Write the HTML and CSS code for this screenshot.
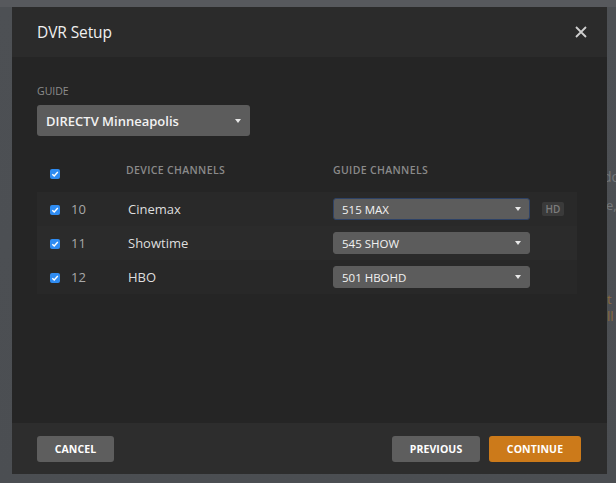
FILE: index.html
```html
<!DOCTYPE html>
<html>
<head>
<meta charset="utf-8">
<link rel="stylesheet" href="styles.css">
</head>
<body>
<div class="backdrop">
  <span class="bg-text bg-t1">do</span>
  <span class="bg-text bg-t2">e,</span>
  <span class="bg-text bg-t3 orange">t</span>
  <span class="bg-text bg-t4 orange">ll</span>
</div>
<div class="stage">
  <div class="modal">
    <div class="modal-header">
      <h1 class="title">DVR Setup</h1>
      <svg class="close" width="12" height="12" viewBox="0 0 12 12"><path d="M1 1 L11 11 M11 1 L1 11" stroke="#cfcfcf" stroke-width="1.8" fill="none"/></svg>
    </div>
    <div class="modal-body">
      <div class="label">GUIDE</div>
      <div class="select guide-select"><span>DIRECTV Minneapolis</span><i class="caret"></i></div>

      <div class="table">
        <div class="thead">
          <span class="cb"><svg width="8" height="8" viewBox="0 0 8 8"><path d="M1.3 4.2 L3.2 6 L6.8 2" stroke="#fff" stroke-width="1.4" fill="none"/></svg></span>
          <span></span>
          <span class="th dev">DEVICE CHANNELS</span>
          <span class="th">GUIDE CHANNELS</span>
          <span></span>
        </div>
        <div class="row r1">
          <span class="cb"><svg width="8" height="8" viewBox="0 0 8 8"><path d="M1.3 4.2 L3.2 6 L6.8 2" stroke="#fff" stroke-width="1.4" fill="none"/></svg></span>
          <span class="num">10</span>
          <span class="name">Cinemax</span>
          <div class="select row-select focused"><span>515 MAX</span><i class="caret"></i></div>
          <span class="hd">HD</span>
        </div>
        <div class="row r2">
          <span class="cb"><svg width="8" height="8" viewBox="0 0 8 8"><path d="M1.3 4.2 L3.2 6 L6.8 2" stroke="#fff" stroke-width="1.4" fill="none"/></svg></span>
          <span class="num">11</span>
          <span class="name">Showtime</span>
          <div class="select row-select"><span>545 SHOW</span><i class="caret"></i></div>
          <span></span>
        </div>
        <div class="row r3">
          <span class="cb"><svg width="8" height="8" viewBox="0 0 8 8"><path d="M1.3 4.2 L3.2 6 L6.8 2" stroke="#fff" stroke-width="1.4" fill="none"/></svg></span>
          <span class="num">12</span>
          <span class="name">HBO</span>
          <div class="select row-select"><span>501 HBOHD</span><i class="caret"></i></div>
          <span></span>
        </div>
      </div>
    </div>
    <div class="modal-footer">
      <button class="btn cancel">CANCEL</button>
      <div class="spacer"></div>
      <button class="btn previous">PREVIOUS</button>
      <button class="btn continue">CONTINUE</button>
    </div>
  </div>
</div>
</body>
</html>
```
FILE: styles.css
```css
* { box-sizing: border-box; }
html, body {
  margin: 0;
  padding: 0;
  width: 616px;
  height: 483px;
  overflow: hidden;
}
body {
  font-family: "Open Sans", "Noto Sans", sans-serif;
  background: linear-gradient(to bottom, #57595d 0, #57595d 7px, #4d5054 7px, #4b4e52 100%);
  position: relative;
}
.backdrop {
  position: absolute;
  left: 0; top: 0; width: 616px; height: 483px;
}
.bg-text {
  position: absolute;
  font-size: 14px;
  line-height: 16px;
  color: #74777a;
  white-space: nowrap;
}
.bg-t1 { top: 169px; left: 603px; }
.bg-t2 { top: 197px; left: 606px; font-size: 13px; }
.bg-t3 { top: 291px; left: 607px; font-size: 13px; }
.bg-t4 { top: 308px; left: 607px; font-size: 13px; }
.orange { color: #8a6a3e; }

.stage {
  position: relative;
  padding: 7px 0 0 12px;
}
.modal {
  width: 595px;
  height: 467px;
  display: flex;
  flex-direction: column;
  background: #252525;
}
.modal-header {
  height: 50px;
  flex: none;
  background: #2b2b2b;
  display: flex;
  align-items: center;
  justify-content: space-between;
  padding: 0 20px 0 25px;
}
.title {
  margin: 0;
  font-size: 15.5px;
  font-weight: 400;
  color: #f0f0f0;
  letter-spacing: -0.1px;
}
.close { display: block; margin-top: -1px; }

.modal-body {
  flex: 1;
  padding: 27px 30px 0 25px;
}
.label {
  font-size: 10.5px;
  line-height: 14px;
  color: #8d8d8d;
}
.select {
  position: relative;
  display: flex;
  align-items: center;
  background: #5c5c5c;
  border-radius: 3px;
  color: #f2f2f2;
}
.guide-select {
  margin-top: 7px;
  width: 213px;
  height: 31px;
  padding-left: 9px;
  font-size: 13px;
  font-weight: 600;
}
.caret {
  position: absolute;
  right: 9px;
  top: 50%;
  margin-top: -2px;
  width: 0; height: 0;
  border-left: 3px solid transparent;
  border-right: 3px solid transparent;
  border-top: 4px solid #e8e8e8;
}
.table { margin-top: 24px; width: 540px; }
.thead, .row {
  display: grid;
  grid-template-columns: 21px 57px 205px 209px 1fr;
  align-items: center;
  padding-left: 13px;
}
.thead { height: 32px; align-items: start; padding-top: 4px; }
.thead .cb { margin-top: 5px; }
.th {
  font-size: 10.5px;
  font-weight: 600;
  color: #8a8a8a;
  letter-spacing: 0.35px;
  line-height: 12px;
}
.th.dev { margin-left: -2px; }
.row { height: 34px; }
.r1 { background: #292929; }
.r2 { background: #2b2b2b; }
.r3 { background: #282828; }
.cb {
  width: 10px; height: 10px;
  border-radius: 2px;
  background: #2f8cf2;
  display: flex;
  align-items: center;
  justify-content: center;
}
.cb svg { display: block; }
.row .cb { margin-top: 2px; }
.num { font-size: 13px; color: #a8a8a8; }
.name { font-size: 13px; color: #dedede; }
.row-select {
  width: 197px;
  height: 22px;
  padding-left: 8px;
  font-size: 11.5px;
  border: 1px solid #5c5c5c;
}
.row-select .caret { right: 8px; }
.focused { border-color: #2e4266; }
.hd {
  justify-self: start;
  width: 22px;
  height: 14px;
  border-radius: 2px;
  background: #3a3a3a;
  color: #7d7d7d;
  font-size: 10px;
  font-weight: 600;
  display: flex;
  align-items: center;
  justify-content: center;
}
.modal-footer {
  height: 51px;
  flex: none;
  background: #2d2d2d;
  display: flex;
  align-items: center;
  padding: 1px 26px 0 25px;
}
.spacer { flex: 1; }
.btn {
  height: 26px;
  border: 0;
  border-radius: 3px;
  color: #fff;
  font-family: "Open Sans", "Noto Sans", sans-serif;
  font-size: 10.5px;
  font-weight: 700;
  letter-spacing: 0.1px;
  padding: 0;
}
.cancel { width: 77px; background: #5e5e5e; }
.previous { width: 88px; background: #5e5e5e; margin-right: 9px; }
.continue { width: 92px; background: #cc7a1a; }
```
